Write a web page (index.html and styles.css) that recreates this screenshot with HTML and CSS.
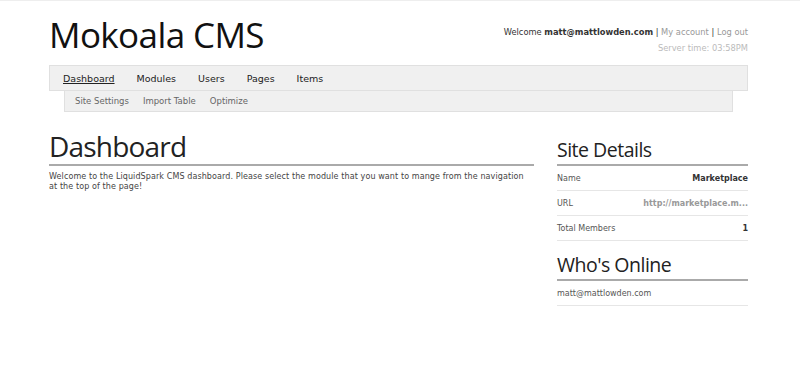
FILE: index.html
```html
<!DOCTYPE html>
<html lang="en">

<head>
    <meta charset="utf-8">
    <title>Mokoala CMS - Dashboard</title>
    <link rel="stylesheet" href="styles.css">
</head>

<body>

    <div class="wrapper">

        <header class="header">
            <h1 class="logo">Mokoala CMS</h1>
            <div class="userinfo">
                <p class="welcome">Welcome <strong>matt@mattlowden.com</strong> | <a href="#">My account</a> | <a href="#">Log out</a></p>
                <p class="servertime">Server time: 03:58PM</p>
            </div>
        </header>

        <nav class="mainnav">
            <a class="active" href="#">Dashboard</a>
            <a href="#">Modules</a>
            <a href="#">Users</a>
            <a href="#">Pages</a>
            <a href="#">Items</a>
        </nav>
        <nav class="subnav">
            <a href="#">Site Settings</a>
            <a href="#">Import Table</a>
            <a href="#">Optimize</a>
        </nav>

        <div class="content">
            <main class="maincol">
                <h2 class="bigheading">Dashboard</h2>
                <p class="intro">Welcome to the LiquidSpark CMS dashboard. Please select the module that you want to mange from the navigation at the top of the page!</p>
            </main>

            <aside class="sidebar">
                <h3 class="sideheading">Site Details</h3>
                <ul class="details">
                    <li><span>Name</span><strong>Marketplace</strong></li>
                    <li><span>URL</span><strong class="url">http://marketplace.m...</strong></li>
                    <li><span>Total Members</span><strong>1</strong></li>
                </ul>

                <h3 class="sideheading">Who's Online</h3>
                <ul class="online">
                    <li>matt@mattlowden.com</li>
                </ul>
            </aside>
        </div>

    </div>

</body>

</html>
```

FILE: styles.css
```css
body {
    margin: 0;
    border-top: 1px solid #eee;
    background-color: #fff;
    font-family: 'DejaVu Sans', Verdana, sans-serif;
    color: #333;
}

a {
    color: #333;
    text-decoration: none;
}

.wrapper {
    width: 699px;
    margin-left: 49px;
}

/* header */

.header {
    display: flex;
    justify-content: space-between;
    height: 64px;
}

.logo {
    margin: 10px 0 0 0;
    font-family: 'Open Sans', sans-serif;
    font-weight: normal;
    font-size: 35px;
    letter-spacing: -0.6px;
    color: #111;
}

.userinfo {
    text-align: right;
    font-size: 8.3px;
}

.welcome {
    margin: 26px 0 0 0;
    color: #333;
}

.welcome a {
    color: #999;
}

.servertime {
    margin: 6px 0 0 0;
    color: #bbb;
}

/* navigation */

.mainnav {
    display: flex;
    gap: 22px;
    height: 24px;
    padding-left: 13px;
    align-items: center;
    background-color: #f0f0f0;
    border: 1px solid #e0e0e0;
}

.mainnav a {
    font-size: 9.5px;
    color: #222;
}

.mainnav .active {
    text-decoration: underline;
}

.subnav {
    display: flex;
    gap: 14px;
    height: 20px;
    margin: 0 15px;
    padding-left: 10px;
    align-items: center;
    background-color: #f0f0f0;
    border: 1px solid #e0e0e0;
    border-top: none;
}

.subnav a {
    font-size: 8.5px;
    color: #666;
}

/* content */

.content {
    display: flex;
    gap: 23px;
}

.maincol {
    width: 485px;
}

.bigheading {
    margin: 16px 0 0 0;
    font-family: 'Open Sans', sans-serif;
    font-weight: normal;
    font-size: 28px;
    letter-spacing: -0.8px;
    line-height: 36px;
    color: #222;
    border-bottom: 2px solid #aaa;
}

.intro {
    margin: 6px 0 0 0;
    font-size: 8px;
    letter-spacing: 0.1px;
    line-height: 10px;
    color: #444;
}

.sidebar {
    width: 191px;
    padding-top: 24px;
}

.sideheading {
    margin: 0;
    font-family: 'Open Sans', sans-serif;
    font-weight: normal;
    font-size: 19.5px;
    letter-spacing: -0.5px;
    line-height: 28px;
    color: #222;
    border-bottom: 2px solid #aaa;
}

.details,
.online {
    list-style: none;
    margin: 0 0 10px 0;
    padding: 0;
}

.details li,
.online li {
    display: flex;
    justify-content: space-between;
    align-items: center;
    height: 24px;
    font-size: 8px;
    color: #555;
    border-bottom: 1px solid #e6e6e6;
}

.details strong {
    color: #333;
}

.details .url {
    color: #999;
}
```
